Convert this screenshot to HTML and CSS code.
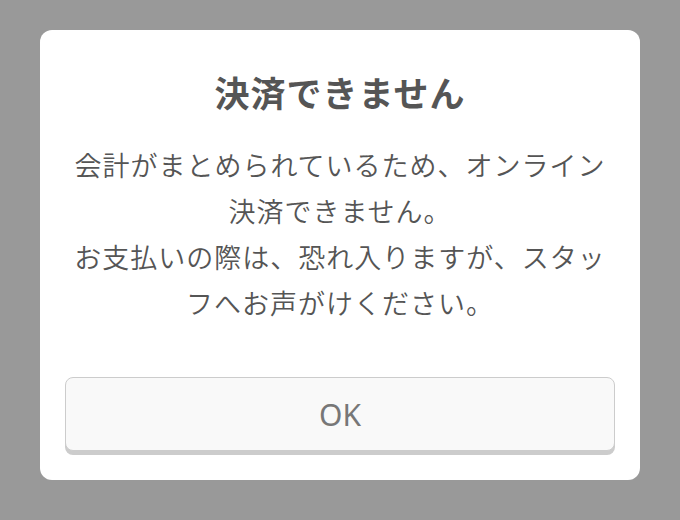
FILE: index.html
```html
<!DOCTYPE html>
<html lang="ja">
<head>
  <meta charset="UTF-8" />
  <title>決済できません</title>
  <link rel="stylesheet" href="styles.css">
</head>
<body>
  <div class="overlay">
    <div class="dialog">
      <h2 class="dialog-title">決済できません</h2>
      <p class="dialog-text">会計がまとめられているため、オンライン決済できません。<br>お支払いの際は、恐れ入りますが、スタッフへお声がけください。</p>
      <button class="dialog-btn" type="button">OK</button>
    </div>
  </div>
</body>
</html>
```

FILE: styles.css
```css
html, body {
  margin: 0;
  height: 100%;
}
body {
  font-family: "Noto Sans CJK JP", "Noto Sans", sans-serif;
  background: #999;
}
.overlay {
  padding: 30px 40px 40px;
}
.dialog {
  background: #fff;
  border-radius: 12px;
  padding: 39px 25px 25px;
  box-sizing: border-box;
  height: 450px;
  display: flex;
  flex-direction: column;
  align-items: center;
}
.dialog-title {
  margin: 0;
  font-size: 35px;
  letter-spacing: 1px;
  line-height: 46px;
  font-weight: bold;
  color: #555;
}
.dialog-text {
  margin: 27px 0 0;
  font-size: 27px;
  letter-spacing: 1px;
  line-height: 46px;
  font-weight: 350;
  color: #555;
  text-align: center;
}
.dialog-btn {
  margin-top: auto;
  width: 100%;
  height: 74px;
  background: #f9f9f9;
  border: 1px solid #ccc;
  border-radius: 8px;
  box-shadow: 0 4px 0 #ccc;
  font-family: "Noto Sans", sans-serif;
  font-size: 30px;
  color: #777;
  margin-bottom: 4px;
}
```
